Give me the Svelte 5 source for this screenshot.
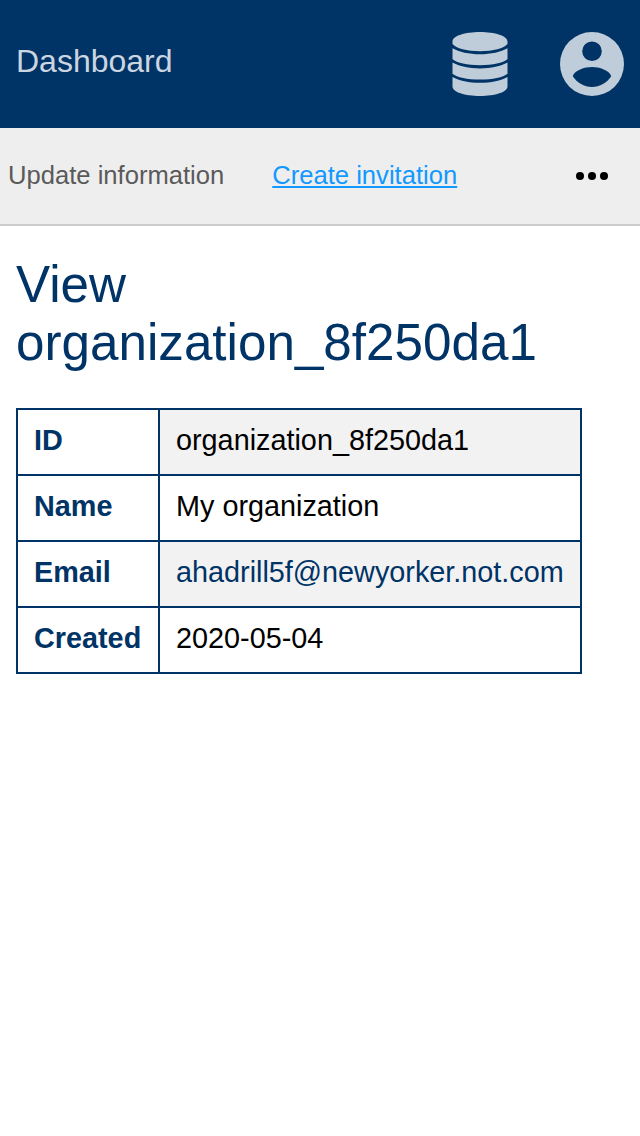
<script>
  const rows = [
    { label: 'ID', value: 'organization_8f250da1' },
    { label: 'Name', value: 'My organization' },
    { label: 'Email', value: 'ahadrill5f@newyorker.not.com', link: true },
    { label: 'Created', value: '2020-05-04' }
  ];
</script>

<header>
  <a class="home" href="#dashboard">Dashboard</a>
  <nav class="icons">
    <a href="#data" aria-label="Data">
      <svg width="56" height="64" viewBox="0 0 56 64"><path d="M28 0C43 0 55.5 4 55.5 9.5V12C52 16.5 41 19.2 28 19.2S4 16.5.5 12V9.5C.5 4 13 0 28 0ZM.5 16.2C7 20 17 22.2 28 22.2S49 20 55.5 16.2V27.3C51 31 41 33.2 28 33.2S5 31 .5 27.3ZM.5 30.6C7 34.2 17 36.4 28 36.4S49 34.2 55.5 30.6V41.7C51 45.4 41 47.6 28 47.6S5 45.4.5 41.7ZM.5 45C7 48.6 17 50.8 28 50.8S49 48.6 55.5 45V54.5C55.5 60 43 64 28 64S.5 60 .5 54.5Z" /></svg>
    </a>
    <a href="#account" aria-label="Account">
      <svg width="64" height="64" viewBox="0 0 64 64"><path fill-rule="evenodd" d="M32 0a32 32 0 1 0 0 64a32 32 0 1 0 0-64ZM32 9.4a9.8 9.8 0 1 1 0 19.6a9.8 9.8 0 1 1 0-19.6ZM12.8 44.3C14.5 38.4 24.5 35.1 32 35.1S49.5 38.4 51.2 44.3C47 50.8 39.8 55.1 32 55.1S17 50.8 12.8 44.3Z" /></svg>
    </a>
  </nav>
</header>
<nav class="actions">
  <a href="#update">Update information</a>
  <a class="active" href="#invite">Create invitation</a>
  <button aria-label="More"><svg width="32" height="8" viewBox="0 0 32 8"><circle cx="4" cy="4" r="4" /><circle cx="16" cy="4" r="4" /><circle cx="28" cy="4" r="4" /></svg></button>
</nav>
<main>
  <h1>View organization_8f250da1</h1>
  <table>
    <tbody>
      {#each rows as row}
        <tr>
          <th>{row.label}</th>
          <td>{#if row.link}<a href="mailto:{row.value}">{row.value}</a>{:else}{row.value}{/if}</td>
        </tr>
      {/each}
    </tbody>
  </table>
</main>

<style>
  :global(body) { background: #fff; font-family: "Liberation Sans", Arial, sans-serif; }
  a { text-decoration: none; }
  svg { display: block; fill: currentColor; }
  header { height: 128px; box-sizing: border-box; padding: 0 16px; display: flex; align-items: center; justify-content: space-between; background: #003366; }
  header a { color: #bfccd9; }
  header .home { color: #ccd6e0; font-size: 32px; line-height: 36px; padding-bottom: 6px; }
  .icons { display: flex; gap: 52px; }
  .actions { height: 98px; box-sizing: border-box; border-bottom: 2px solid #ccc; background: #eee; display: flex; align-items: center; gap: 48px; padding: 0 32px 0 8px; font-size: 25.6px; line-height: 30px; }
  .actions a { color: #5a5a5a; white-space: nowrap; padding-bottom: 2px; }
  .actions .active { color: #1199ff; text-decoration: underline; }
  button { margin-left: auto; padding: 0; border: 0; background: none; color: #000; }
  main { padding: 30px 16px; }
  h1 { margin: 0 0 36px; color: #003366; font-size: 51.2px; line-height: 58px; font-weight: 400; }
  table { border-collapse: collapse; font-size: 28.8px; line-height: 32px; }
  th, td { border: 2px solid #003366; padding: 14px 16px 18px; text-align: left; white-space: nowrap; }
  th { box-sizing: border-box; width: 142px; }
  th, td a { color: #003366; }
  tr:nth-child(odd) td { background: #f2f2f2; }
</style>
